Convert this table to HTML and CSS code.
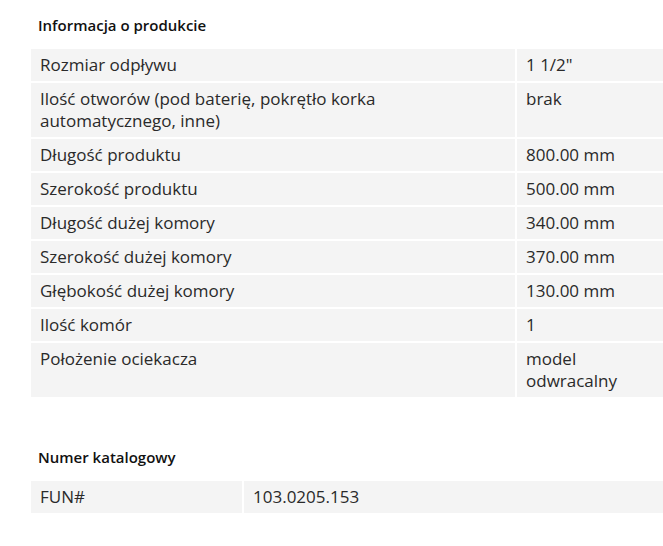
FILE: index.html
```html
<!DOCTYPE html>
<html lang="pl">
<head>
<meta charset="utf-8">
<link rel="stylesheet" href="styles.css">
</head>
<body>
<div class="page">
  <section class="block block-first">
    <h3 class="block-title">Informacja o produkcie</h3>
    <table class="spec spec-main">
      <tbody>
        <tr><td class="label">Rozmiar odpływu</td><td class="value">1 1/2"</td></tr>
        <tr><td class="label">Ilość otworów (pod baterię, pokrętło korka automatycznego, inne)</td><td class="value">brak</td></tr>
        <tr><td class="label">Długość produktu</td><td class="value">800.00 mm</td></tr>
        <tr><td class="label">Szerokość produktu</td><td class="value">500.00 mm</td></tr>
        <tr><td class="label">Długość dużej komory</td><td class="value">340.00 mm</td></tr>
        <tr><td class="label">Szerokość dużej komory</td><td class="value">370.00 mm</td></tr>
        <tr><td class="label">Głębokość dużej komory</td><td class="value">130.00 mm</td></tr>
        <tr><td class="label">Ilość komór</td><td class="value">1</td></tr>
        <tr><td class="label">Położenie ociekacza</td><td class="value value-narrow">model odwracalny</td></tr>
      </tbody>
    </table>
  </section>
  <section class="block block-second">
    <h3 class="block-title">Numer katalogowy</h3>
    <table class="spec spec-cat">
      <tbody>
        <tr><td class="label">FUN#</td><td class="value">103.0205.153</td></tr>
      </tbody>
    </table>
  </section>
</div>
</body>
</html>
```
FILE: styles.css
```css
html, body {
  margin: 0;
  padding: 0;
  background: #ffffff;
  overflow: hidden;
}
body {
  font-family: "Open Sans", "Liberation Sans", sans-serif;
  color: #2a2a2a;
}
.page {
  width: 720px;
  padding-left: 29px;
}
.block-first {
  padding-top: 15px;
}
.block-second {
  padding-top: 48px;
}
.block-title {
  margin: 0 0 12px 0;
  padding-left: 9px;
  font-size: 15px;
  line-height: 20px;
  font-weight: 600;
  color: #111111;
}
.spec {
  border-collapse: separate;
  border-spacing: 2px;
  table-layout: fixed;
  font-size: 17px;
  line-height: 22px;
}
.spec td {
  background: #f4f4f4;
  padding: 5px 8px 5px 9px;
  vertical-align: top;
}
.spec-main {
  width: 690px;
}
.spec-main .label {
  width: 467px;
}
.spec-main .value-narrow {
  padding-right: 60px;
}
.spec-cat {
  width: 690px;
}
.spec-cat .label {
  width: 194px;
}
```
